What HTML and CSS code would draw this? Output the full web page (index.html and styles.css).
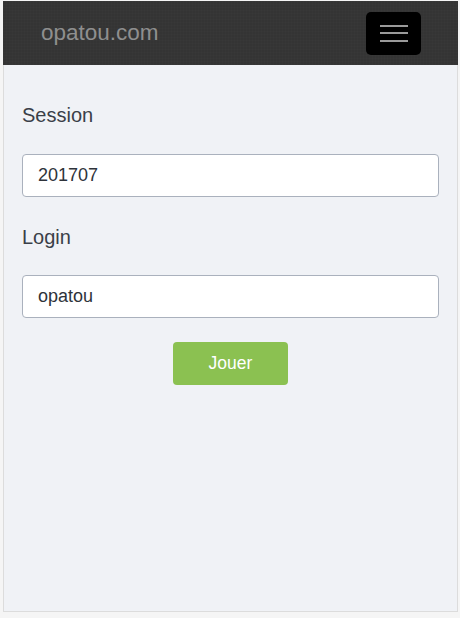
FILE: index.html
```html
<!DOCTYPE html>
<html lang="fr">
<head>
<meta charset="utf-8">
<title>opatou.com</title>
<link rel="stylesheet" href="styles.css">
</head>
<body>
<div class="page">
  <nav class="navbar">
    <span class="brand">opatou.com</span>
    <button class="toggle" type="button" aria-label="Menu">
      <span class="bar"></span>
      <span class="bar"></span>
      <span class="bar"></span>
    </button>
  </nav>
  <main class="panel">
    <form class="form">
      <label class="label" for="session">Session</label>
      <input class="field" id="session" type="text" value="201707">
      <label class="label" for="login">Login</label>
      <input class="field" id="login" type="text" value="opatou">
      <div class="actions">
        <button class="play" type="button">Jouer</button>
      </div>
    </form>
  </main>
</div>
</body>
</html>
```

FILE: styles.css
```css
html, body {
  margin: 0;
  padding: 0;
}
body {
  background: #f5f5f5;
  font-family: "Liberation Sans", Arial, sans-serif;
  width: 460px;
  height: 618px;
  overflow: hidden;
}
.page {
  margin: 1px 2px 0 3px;
  width: 455px;
  height: 611px;
  display: flex;
  flex-direction: column;
}
.navbar {
  height: 64px;
  flex: none;
  box-sizing: border-box;
  background-color: #343434;
  background-image:
    repeating-linear-gradient(0deg, rgba(255,255,255,0.012) 0 1px, transparent 1px 3px),
    repeating-linear-gradient(90deg, rgba(255,255,255,0.012) 0 1px, transparent 1px 3px);
  display: flex;
  align-items: center;
  justify-content: space-between;
  padding: 0 37px 0 38px;
}
.brand {
  color: #8f8f8f;
  font-size: 22.5px;
  line-height: 26px;
}
.toggle {
  width: 55px;
  height: 43px;
  background: #000;
  border: none;
  border-radius: 5px;
  padding: 0;
  display: flex;
  flex-direction: column;
  align-items: center;
  justify-content: center;
  gap: 5.5px;
}
.bar {
  display: block;
  width: 28px;
  height: 2px;
  background: #9a9a9a;
}
.panel {
  flex: 1;
  background: #f0f2f6;
  border: 1px solid #dcdcdc;
  border-top: none;
  padding: 39px 18px 0 18px;
}
.form {
  display: flex;
  flex-direction: column;
}
.label {
  font-size: 20px;
  line-height: 22px;
  color: #3a3f48;
  margin-bottom: 28px;
}
.field {
  box-sizing: border-box;
  height: 43px;
  border: 1px solid #aab1bd;
  border-radius: 4px;
  background: #fff;
  padding: 0 15px;
  font-family: "Liberation Sans", Arial, sans-serif;
  font-size: 18px;
  color: #2e333a;
  margin: 0 0 29px 0;
  outline: none;
}
#login {
  margin-bottom: 24px;
}
.label[for="login"] {
  margin-bottom: 27px;
}
.actions {
  display: flex;
  justify-content: center;
}
.play {
  width: 115px;
  height: 43px;
  background: #8bc151;
  border: none;
  border-radius: 4px;
  color: #fff;
  font-family: "Liberation Sans", Arial, sans-serif;
  font-size: 17.5px;
  padding: 0;
}
```
